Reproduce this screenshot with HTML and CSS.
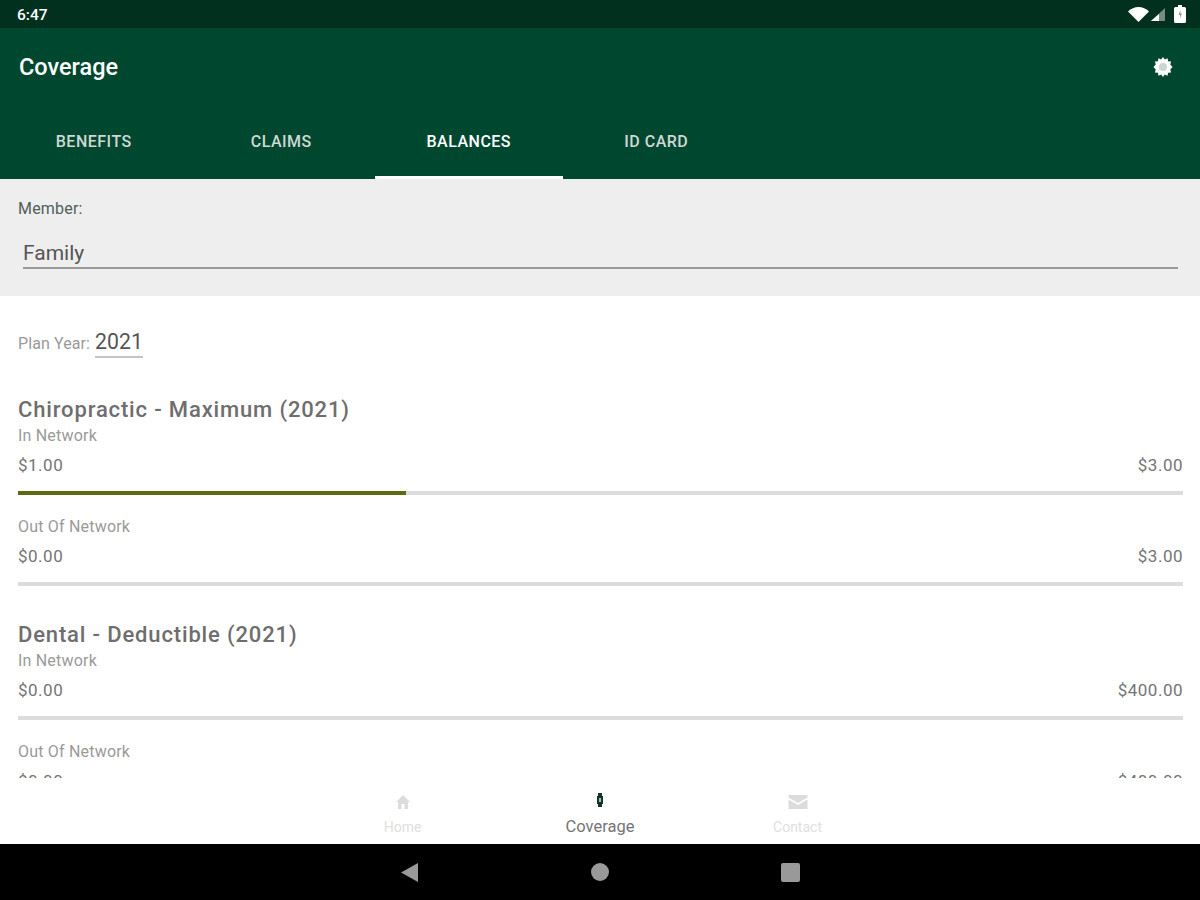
FILE: index.html
```html
<!DOCTYPE html>
<html>
<head>
    <title>Coverage</title>
    <link rel="stylesheet" href="styles.css">
</head>
<body>
    <div class="screen">
        <div class="status-bar">
            <span class="clock">6:47</span>
            <div class="status-icons">
                <svg width="21" height="15" viewBox="0 0 21 15"><path d="M0 4.500C3 1.500 6.500 0 10.500 0S18 1.500 21 4.500L10.500 15z" fill="#fff"/></svg>
                <svg width="14" height="13" viewBox="0 0 14 13"><path d="M14 0v13H0z" fill="#fff" opacity=".45"/><path d="M8 6v7H0l8-7z" fill="#fff"/></svg>
                <svg class="battery" width="12" height="18" viewBox="0 0 12 18"><path d="M4 0h4v2h2.500A1.500 1.500 0 0 1 12 3.500V16.500a1.500 1.500 0 0 1-1.500 1.500h-9A1.500 1.500 0 0 1 0 16.500V3.500A1.500 1.500 0 0 1 1.500 2H4z" fill="#fff"/><path d="M6.500 5 4.500 10h1.500v3l2-4.500H6.500z" fill="#8a9a92"/></svg>
            </div>
        </div>
        <header class="app-bar">
            <div class="title-row">
                <h1>Coverage</h1>
                <svg class="gear" width="20" height="20" viewBox="0 0 22 22">
                    <path d="M11 0l2 2.800 3-1.400.6 3.200 3.300.4-.9 3.200L21.500 11l-2.500 2.800.9 3.200-3.300.4-.6 3.200-3-1.400L11 22l-2-2.800-3 1.400-.6-3.200-3.300-.4.900-3.200L.5 11 3 8.200l-.9-3.200 3.300-.4.600-3.200 3 1.400z" fill="#fff"/>
                    <circle cx="11" cy="11" r="4.500" fill="#cdd5d1"/>
                </svg>
            </div>
            <nav class="tabs">
                <div class="tab">BENEFITS</div>
                <div class="tab">CLAIMS</div>
                <div class="tab active">BALANCES</div>
                <div class="tab">ID CARD</div>
            </nav>
        </header>
        <section class="member-panel">
            <div class="member-label">Member:</div>
            <div class="member-select">Family</div>
        </section>
        <main class="content">
            <div class="plan-year">
                <span class="plan-label">Plan Year:</span>
                <span class="plan-value">2021</span>
            </div>

            <div class="benefit">
                <h2>Chiropractic - Maximum (2021)</h2>
                <div class="network">In Network</div>
                <div class="amounts"><span>$1.00</span><span>$3.00</span></div>
                <div class="bar"><div class="bar-fill" style="width: 33.3%"></div></div>
                <div class="network out">Out Of Network</div>
                <div class="amounts"><span>$0.00</span><span>$3.00</span></div>
                <div class="bar"></div>
            </div>

            <div class="benefit">
                <h2>Dental - Deductible (2021)</h2>
                <div class="network">In Network</div>
                <div class="amounts"><span>$0.00</span><span>$400.00</span></div>
                <div class="bar"></div>
                <div class="network out">Out Of Network</div>
                <div class="amounts"><span>$0.00</span><span>$400.00</span></div>
                <div class="bar"></div>
            </div>
        </main>
        <nav class="bottom-nav">
            <div class="nav-item">
                <svg width="16" height="16" viewBox="0 0 16 16"><path d="M8 1 1 8h2v7h3.500v-5h3v5H13V8h2z" fill="#dcdcdc"/></svg>
                <span>Home</span>
            </div>
            <div class="nav-item current">
                <svg width="16" height="16" viewBox="0 0 16 16"><path d="M6 1h4v3h1v8h-1v3H6v-3H5V4h1z" fill="#12352a"/><path d="M7 6h2v4H7z" fill="#a9bab3"/></svg>
                <span>Coverage</span>
            </div>
            <div class="nav-item">
                <svg width="20" height="16" viewBox="0 0 20 16"><path d="M.5 1h19v2.500L10 9 .5 3.500zM.5 5.500 10 11l9.500-5.500V15H.5z" fill="#dcdcdc"/></svg>
                <span>Contact</span>
            </div>
        </nav>
        <div class="system-nav">
            <svg class="sys-back" width="17" height="19" viewBox="0 0 17 19"><path d="M17 0v19L0 9.500z" fill="#999"/></svg>
            <div class="sys-home"></div>
            <div class="sys-recent"></div>
        </div>
    </div>
</body>
</html>
```

FILE: styles.css
```css
* {
    box-sizing: border-box;
}

html, body {
    margin: 0;
    padding: 0;
}

body {
    font-family: Roboto, "Liberation Sans", sans-serif;
    background-color: #fff;
}

.screen {
    width: 1200px;
    height: 900px;
    display: flex;
    flex-direction: column;
    overflow: hidden;
}

.status-bar {
    height: 28px;
    background-color: #01301f;
    color: #fff;
    display: flex;
    justify-content: space-between;
    align-items: center;
    padding: 0 14px 0 17px;
}

.clock {
    margin-top: 2px;
    font-size: 15.500px;
    font-weight: 500;
}

.status-icons {
    display: flex;
    align-items: center;
    gap: 2px;
}

.battery {
    margin-left: 7px;
}

.app-bar {
    height: 151px;
    background-color: #004730;
    display: flex;
    flex-direction: column;
}

.title-row {
    height: 77px;
    padding: 0 27px 0 19px;
    display: flex;
    justify-content: space-between;
    align-items: center;
}

h1 {
    margin: 1px 0 0;
    font-size: 23.500px;
    font-weight: 500;
    color: #fff;
}

.tabs {
    display: flex;
    height: 74px;
}

.tab {
    width: 187.500px;
    padding-top: 2px;
    display: flex;
    justify-content: center;
    align-items: center;
    font-size: 16px;
    font-weight: 500;
    letter-spacing: .5px;
    color: #cfd8d3;
    border-bottom: 3px solid transparent;
}

.tab.active {
    color: #fff;
    border-bottom-color: #fff;
}

.member-panel {
    height: 117px;
    background-color: #eee;
    padding: 20px 22px 0 18px;
}

.member-label {
    font-size: 16px;
    line-height: 20px;
    letter-spacing: .2px;
    color: #50605a;
}

.member-select {
    margin: 22px 0 0 5px;
    padding-bottom: 2px;
    font-size: 21px;
    line-height: 24px;
    color: #555;
    border-bottom: 2px solid #999;
}

.content {
    flex: 1;
    min-height: 0;
    overflow: hidden;
    padding: 34px 17px 0 18px;
}

.plan-year {
    display: flex;
    align-items: baseline;
    gap: 5px;
}

.plan-label {
    font-size: 16px;
    letter-spacing: .1px;
    color: #9a9a9a;
}

.plan-value {
    font-size: 21.250px;
    line-height: 24px;
    color: #555;
    padding-bottom: 2px;
    border-bottom: 2px solid #c4c4c4;
}

.benefit {
    margin-bottom: 36px;
}

.plan-year + .benefit {
    margin-top: 39px;
}

h2 {
    margin: 0;
    font-size: 22px;
    line-height: 26px;
    font-weight: 500;
    letter-spacing: .85px;
    color: #6e6e6e;
}

.network {
    margin-top: 3px;
    font-size: 16px;
    line-height: 20px;
    letter-spacing: .2px;
    color: #9a9a9a;
}

.network.out {
    margin-top: 22px;
}

.amounts {
    display: flex;
    justify-content: space-between;
    margin-top: 9px;
    font-size: 17px;
    line-height: 20px;
    letter-spacing: .5px;
    color: #757575;
}

.bar {
    height: 4px;
    margin-top: 16px;
    background-color: #dcdcdc;
}

.bar-fill {
    height: 100%;
    background-color: #5c6b10;
}

.bottom-nav {
    height: 66px;
    display: flex;
    justify-content: center;
    background-color: #fff;
}

.nav-item {
    width: 197.500px;
    display: flex;
    flex-direction: column;
    align-items: center;
    padding-top: 16px;
    gap: 9px;
    font-size: 14px;
    line-height: 16px;
    color: #e0e0e0;
}

.nav-item.current {
    padding-top: 14px;
    font-size: 16.500px;
    line-height: 20px;
    color: #757575;
    gap: 9px;
}

.system-nav {
    height: 56px;
    padding-left: 1px;
    background-color: #000;
    display: flex;
    justify-content: center;
    align-items: center;
    gap: 172px;
}

.sys-back {
    margin-right: 1px;
}

.sys-home {
    width: 18px;
    height: 18px;
    border-radius: 50%;
    background-color: #999;
}

.sys-recent {
    width: 19px;
    height: 19px;
    border-radius: 2px;
    background-color: #999;
}
```
